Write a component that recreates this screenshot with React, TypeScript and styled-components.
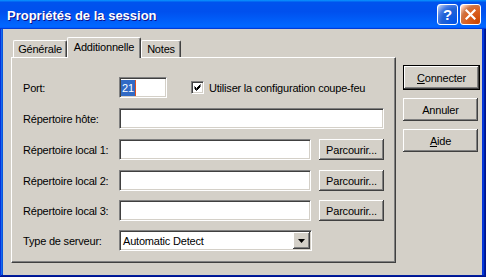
import styled, { createGlobalStyle } from 'styled-components'

const FACE = '#d4d0c8'

const GlobalStyle = createGlobalStyle`
  html, body {
    margin: 0;
    padding: 0;
    background: #0b4fe0;
  }
  body {
    font-family: "Liberation Sans", Arial, sans-serif;
    font-size: 11px;
    letter-spacing: -0.2px;
    color: #000;
  }
`

const Window = styled.div`
  width: 486px;
  height: 277px;
  box-sizing: border-box;
  display: flex;
  flex-direction: column;
  background: #0831d9;
  box-shadow: inset -1px -1px #00138c, inset 1px 1px #0831d9,
    inset -2px -2px #001ea0, inset 2px 2px #166aee, inset -3px -3px #003bda,
    inset 3px 3px #0855dd;
`

const TitleBar = styled.div`
  height: 29px;
  flex-shrink: 0;
  display: flex;
  align-items: center;
  padding: 0 5px 0 7px;
  background: linear-gradient(
    180deg,
    #0997ff 0%,
    #0053ee 8%,
    #0050ee 40%,
    #0066ff 88%,
    #0066ff 93%,
    #005bff 95%,
    #003dd7 96%,
    #003dd7 100%
  );
`

const Title = styled.span`
  color: #fff;
  font-size: 13px;
  font-weight: bold;
  letter-spacing: 0;
  text-shadow: 1px 1px #0f1089;
  padding-top: 1px;
`

const CaptionButtons = styled.div`
  margin-left: auto;
  display: flex;
  gap: 2px;
`

const CaptionButton = styled.div<{ $kind: 'help' | 'close' }>`
  width: 21px;
  height: 21px;
  box-sizing: border-box;
  border: 1px solid #fff;
  border-radius: 3px;
  display: flex;
  align-items: center;
  justify-content: center;
  color: #fff;
  font-weight: bold;
  font-size: 15px;
  letter-spacing: 0;
  background: ${({ $kind }) =>
    $kind === 'help'
      ? 'radial-gradient(circle at 90% 90%, #0054e9 0%, #2263d5 55%, #4479e4 70%, #a3bbec 90%, #fff 100%)'
      : 'radial-gradient(circle at 90% 90%, #cc4600 0%, #dc6527 55%, #cd7546 70%, #ffccb2 90%, #fff 100%)'};
`

const Body = styled.div`
  flex: 1;
  margin: 0 4px 2px 3px;
  background: ${FACE};
  display: flex;
  padding: 8px 0 0 8px;
`

const TabArea = styled.div`
  display: flex;
  flex-direction: column;
`

const TabStrip = styled.div`
  height: 20px;
  display: flex;
  align-items: flex-end;
  padding-left: 2px;
`

const Tab = styled.div<{ $active?: boolean; $width: number }>`
  position: relative;
  width: ${({ $width }) => $width}px;
  height: ${({ $active }) => ($active ? 21 : 17)}px;
  margin-bottom: ${({ $active }) => ($active ? -1 : 0)}px;
  z-index: ${({ $active }) => ($active ? 1 : 0)};
  box-sizing: border-box;
  background: ${FACE};
  border-top: 1px solid #fff;
  border-left: 1px solid #fff;
  border-right: 1px solid #404040;
  border-radius: 2px 2px 0 0;
  box-shadow: inset -1px 0 #808080;
  display: flex;
  align-items: center;
  justify-content: center;
  padding-bottom: ${({ $active }) => ($active ? 3 : 0)}px;
`

const Panel = styled.div`
  width: 385px;
  height: 206px;
  box-sizing: border-box;
  border-top: 1px solid #fff;
  border-left: 1px solid #fff;
  border-right: 1px solid #404040;
  border-bottom: 1px solid #404040;
  box-shadow: inset -1px -1px #808080;
  padding: 19px 0 0 11px;
  display: flex;
  flex-direction: column;
`

const FieldRow = styled.div<{ $gap: number }>`
  display: flex;
  align-items: center;
  height: 21px;
  margin-top: ${({ $gap }) => $gap}px;
`

const Label = styled.span`
  width: 96px;
  flex-shrink: 0;
`

const sunken = `
  box-sizing: border-box;
  border: 1px solid;
  border-color: #808080 #fff #fff #808080;
  box-shadow: inset 1px 1px #404040, inset -1px -1px ${FACE};
  background: #fff;
`

const raised = `
  box-sizing: border-box;
  background: ${FACE};
  box-shadow: inset -1px -1px #404040, inset 1px 1px #fff,
    inset -2px -2px #808080, inset 2px 2px ${FACE};
`

const TextField = styled.div<{ $width: number }>`
  ${sunken}
  width: ${({ $width }) => $width}px;
  height: 21px;
  display: flex;
  align-items: center;
  padding: 1px;
`

const Selection = styled.span`
  background: #316ac5;
  color: #fff;
  height: 16px;
  line-height: 16px;
  padding: 0 1px;
  border-right: 1px solid #e0501c;
`

const CheckOption = styled.label`
  display: flex;
  align-items: center;
  gap: 5px;
  margin-left: 24px;
`

const CheckBox = styled.span`
  ${sunken}
  width: 13px;
  height: 13px;
  display: flex;
  align-items: center;
  justify-content: center;
`

const Button = styled.div<{ $width: number; $height: number }>`
  ${raised}
  width: ${({ $width }) => $width}px;
  height: ${({ $height }) => $height}px;
  display: flex;
  align-items: center;
  justify-content: center;
`

const BrowseSlot = styled.div`
  margin-left: 8px;
`

const Select = styled.div`
  ${sunken}
  width: 193px;
  height: 21px;
  display: flex;
  align-items: center;
  padding: 1px 1px 1px 3px;
`

const DropButton = styled.div`
  ${raised}
  margin-left: auto;
  width: 17px;
  height: 17px;
  display: flex;
  align-items: center;
  justify-content: center;
`

const ButtonColumn = styled.div`
  margin: 28px 0 0 7px;
  display: flex;
  flex-direction: column;
  gap: 8px;
`

const DefaultFrame = styled.div`
  border: 1px solid #000;
  width: fit-content;
`

const Mnemonic = styled.span`
  text-decoration: underline;
`

function CheckMark() {
  return (
    <svg width="7" height="7" viewBox="0 0 7 7">
      <path
        d="M0.5 2.5 L2.5 4.5 L6.5 0.5 M0.5 3.5 L2.5 5.5 L6.5 1.5 M0.5 4.5 L2.5 6.5 L6.5 2.5"
        stroke="#000"
        strokeWidth="1"
        fill="none"
      />
    </svg>
  )
}

function CloseGlyph() {
  return (
    <svg width="11" height="11" viewBox="0 0 11 11">
      <path
        d="M1.5 1.5 L9.5 9.5 M9.5 1.5 L1.5 9.5"
        stroke="#fff"
        strokeWidth="2.2"
        strokeLinecap="square"
      />
    </svg>
  )
}

function DownArrow() {
  return (
    <svg width="7" height="4" viewBox="0 0 7 4">
      <path d="M0 0 H7 L3.5 4 Z" fill="#000" />
    </svg>
  )
}

const tabs = [
  { label: 'Générale', width: 54 },
  { label: 'Additionnelle', width: 74, active: true },
  { label: 'Notes', width: 40 },
]

const localDirs = [
  { label: 'Répertoire local 1:', gap: 10 },
  { label: 'Répertoire local 2:', gap: 10 },
  { label: 'Répertoire local 3:', gap: 9 },
]

export default function App() {
  return (
    <>
      <GlobalStyle />
      <Window>
        <TitleBar>
          <Title>Propriétés de la session</Title>
          <CaptionButtons>
            <CaptionButton $kind="help">?</CaptionButton>
            <CaptionButton $kind="close">
              <CloseGlyph />
            </CaptionButton>
          </CaptionButtons>
        </TitleBar>
        <Body>
          <TabArea>
            <TabStrip>
              {tabs.map((t) => (
                <Tab key={t.label} $width={t.width} $active={t.active}>
                  {t.label}
                </Tab>
              ))}
            </TabStrip>
            <Panel>
              <FieldRow $gap={0}>
                <Label>Port:</Label>
                <TextField $width={48}>
                  <Selection>21</Selection>
                </TextField>
                <CheckOption>
                  <CheckBox>
                    <CheckMark />
                  </CheckBox>
                  Utiliser la configuration coupe-feu
                </CheckOption>
              </FieldRow>
              <FieldRow $gap={10}>
                <Label>Répertoire hôte:</Label>
                <TextField $width={265} />
              </FieldRow>
              {localDirs.map((d) => (
                <FieldRow key={d.label} $gap={d.gap}>
                  <Label>{d.label}</Label>
                  <TextField $width={192} />
                  <BrowseSlot>
                    <Button $width={65} $height={21}>
                      Parcourir...
                    </Button>
                  </BrowseSlot>
                </FieldRow>
              ))}
              <FieldRow $gap={9}>
                <Label>Type de serveur:</Label>
                <Select>
                  Automatic Detect
                  <DropButton>
                    <DownArrow />
                  </DropButton>
                </Select>
              </FieldRow>
            </Panel>
          </TabArea>
          <ButtonColumn>
            <DefaultFrame>
              <Button $width={75} $height={23}>
                <span>
                  <Mnemonic>C</Mnemonic>onnecter
                </span>
              </Button>
            </DefaultFrame>
            <Button $width={75} $height={23}>
              Annuler
            </Button>
            <Button $width={75} $height={23}>
              <span>
                <Mnemonic>A</Mnemonic>ide
              </span>
            </Button>
          </ButtonColumn>
        </Body>
      </Window>
    </>
  )
}
